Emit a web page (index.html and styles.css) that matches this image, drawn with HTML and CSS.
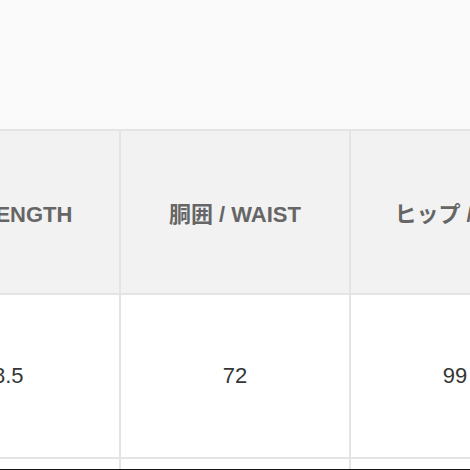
FILE: index.html
```html
<!DOCTYPE html>
<html lang="ja">
<head>
<meta charset="utf-8">
<link rel="stylesheet" href="styles.css">
</head>
<body>
<div class="top"></div>
<div class="wrap">
  <div class="grid">
    <div class="cell head">着丈 / LENGTH</div>
    <div class="cell head">胴囲 / WAIST</div>
    <div class="cell head">ヒップ / HIP</div>
    <div class="cell val">108.5</div>
    <div class="cell val">72</div>
    <div class="cell val">99</div>
    <div class="cell next"></div>
    <div class="cell next"></div>
    <div class="cell next"></div>
  </div>
</div>
</body>
</html>
```
FILE: styles.css
```css
html, body {
  margin: 0;
  padding: 0;
  background: #fafafa;
  height: 470px;
  overflow: hidden;
}
.top {
  height: 129px;
  background: #fafafa;
}
.wrap {
  overflow: hidden;
  border-bottom: 1px solid #161616;
}
.grid {
  display: grid;
  grid-template-columns: 246px 228px 208px;
  grid-template-rows: 162px 162px 10px;
  gap: 2px;
  padding-top: 2px;
  margin-left: -127px;
  width: 686px;
  background: #e4e4e4;
}
.cell {
  display: flex;
  align-items: center;
  justify-content: center;
  font-family: "Liberation Sans", Arial, "Noto Sans CJK JP", sans-serif;
  font-size: 22px;
  white-space: nowrap;
}
.head {
  background: #f2f2f2;
  color: #666666;
  font-weight: bold;
}
.val {
  background: #ffffff;
  color: #363636;
}
.next {
  background: #ffffff;
}
```
